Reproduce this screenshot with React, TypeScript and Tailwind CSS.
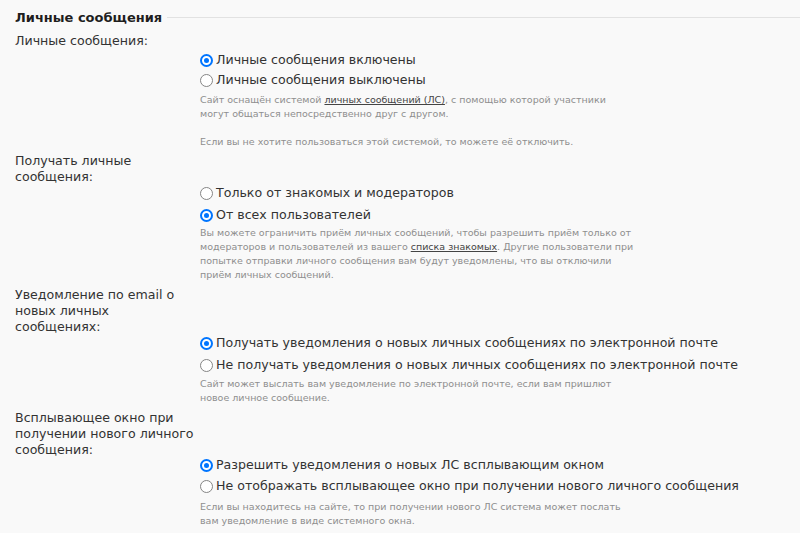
import React from "react";

type Opt = { label: string; checked: boolean };

function Radio({ checked }: { checked: boolean }) {
  return checked ? (
    <span className="flex h-[13px] w-[13px] shrink-0 items-center justify-center rounded-full border-[2px] border-[#0075ff] bg-white">
      <span className="h-[5px] w-[5px] rounded-full bg-[#0075ff]" />
    </span>
  ) : (
    <span className="h-[13px] w-[13px] shrink-0 rounded-full border border-[#858585] bg-white" />
  );
}

function Section({
  label,
  opts,
  desc,
  wrapClass,
  optsClass,
  rowClass,
  descClass,
}: {
  label: React.ReactNode;
  opts: Opt[];
  desc: React.ReactNode;
  wrapClass: string;
  optsClass: string;
  rowClass: string;
  descClass: string;
}) {
  return (
    <div className={wrapClass}>
      <div className="whitespace-nowrap pl-[15px] text-[12.6px] leading-[16px] text-[#333]">{label}</div>
      <div className={optsClass}>
        {opts.map((o, i) => (
          <div key={i} className={rowClass}>
            <Radio checked={o.checked} />
            <span className="whitespace-nowrap text-[12.6px] text-[#333]">{o.label}</span>
          </div>
        ))}
        <div className={descClass}>{desc}</div>
      </div>
    </div>
  );
}

const linkCls = "text-[#444] underline";

export default function App() {
  return (
    <div
      className="min-h-[533px] w-[800px] overflow-hidden bg-[#f9f9f9]"
      style={{ fontFamily: '"DejaVu Sans", Verdana, sans-serif' }}
    >
      <div className="mt-[10px] flex h-[16px] items-center">
        <span className="whitespace-nowrap pl-[15px] pr-[5px] text-[13px] font-bold leading-[16px] text-[#1e1e1e]">
          Личные сообщения
        </span>
        <div className="h-px flex-1 -translate-y-[1px] bg-[#e2e2e2]" />
      </div>

      <Section
        wrapClass="mt-[7px]"
        label="Личные сообщения:"
        optsClass="ml-[200px] mt-[1px]"
        rowClass="flex h-[20px] items-center gap-[3px]"
        descClass="mt-[3px] whitespace-nowrap text-[9.5px] leading-[14px] text-[#8e8e8e]"
        opts={[
          { label: "Личные сообщения включены", checked: true },
          { label: "Личные сообщения выключены", checked: false },
        ]}
        desc={
          <>
            Сайт оснащён системой <span className={linkCls}>личных сообщений (ЛС)</span>, с помощью которой участники
            <br />
            могут общаться непосредственно друг с другом.
            <br />
            <br />
            Если вы не хотите пользоваться этой системой, то можете её отключить.
          </>
        }
      />

      <Section
        wrapClass="mt-[4px]"
        label={
          <>
            Получать личные
            <br />
            сообщения:
          </>
        }
        optsClass="ml-[200px] -mt-[3px]"
        rowClass="flex h-[22px] items-center gap-[3px]"
        descClass="mt-[0px] whitespace-nowrap text-[9.5px] leading-[14px] text-[#8e8e8e]"
        opts={[
          { label: "Только от знакомых и модераторов", checked: false },
          { label: "От всех пользователей", checked: true },
        ]}
        desc={
          <>
            Вы можете ограничить приём личных сообщений, чтобы разрешить приём только от
            <br />
            модераторов и пользователей из вашего <span className={linkCls}>списка знакомых</span>. Другие пользователи при
            <br />
            попытке отправки личного сообщения вам будут уведомлены, что вы отключили
            <br />
            приём личных сообщений.
          </>
        }
      />

      <Section
        wrapClass="mt-[5px]"
        label={
          <>
            Уведомление по email о
            <br />
            новых личных
            <br />
            сообщениях:
          </>
        }
        optsClass="ml-[200px] -mt-[3px]"
        rowClass="flex h-[22px] items-center gap-[3px]"
        descClass="mt-[1px] whitespace-nowrap text-[9.5px] leading-[14px] text-[#8e8e8e]"
        opts={[
          { label: "Получать уведомления о новых личных сообщениях по электронной почте", checked: true },
          { label: "Не получать уведомления о новых личных сообщениях по электронной почте", checked: false },
        ]}
        desc={
          <>
            Сайт может выслать вам уведомление по электронной почте, если вам пришлют
            <br />
            новое личное сообщение.
          </>
        }
      />

      <Section
        wrapClass="mt-[5px]"
        label={
          <>
            Всплывающее окно при
            <br />
            получении нового личного
            <br />
            сообщения:
          </>
        }
        optsClass="ml-[200px] -mt-[3px]"
        rowClass="flex h-[21px] items-center gap-[3px]"
        descClass="mt-[3px] whitespace-nowrap text-[9.5px] leading-[14px] text-[#8e8e8e]"
        opts={[
          { label: "Разрешить уведомления о новых ЛС всплывающим окном", checked: true },
          { label: "Не отображать всплывающее окно при получении нового личного сообщения", checked: false },
        ]}
        desc={
          <>
            Если вы находитесь на сайте, то при получении нового ЛС система может послать
            <br />
            вам уведомление в виде системного окна.
          </>
        }
      />
    </div>
  );
}
